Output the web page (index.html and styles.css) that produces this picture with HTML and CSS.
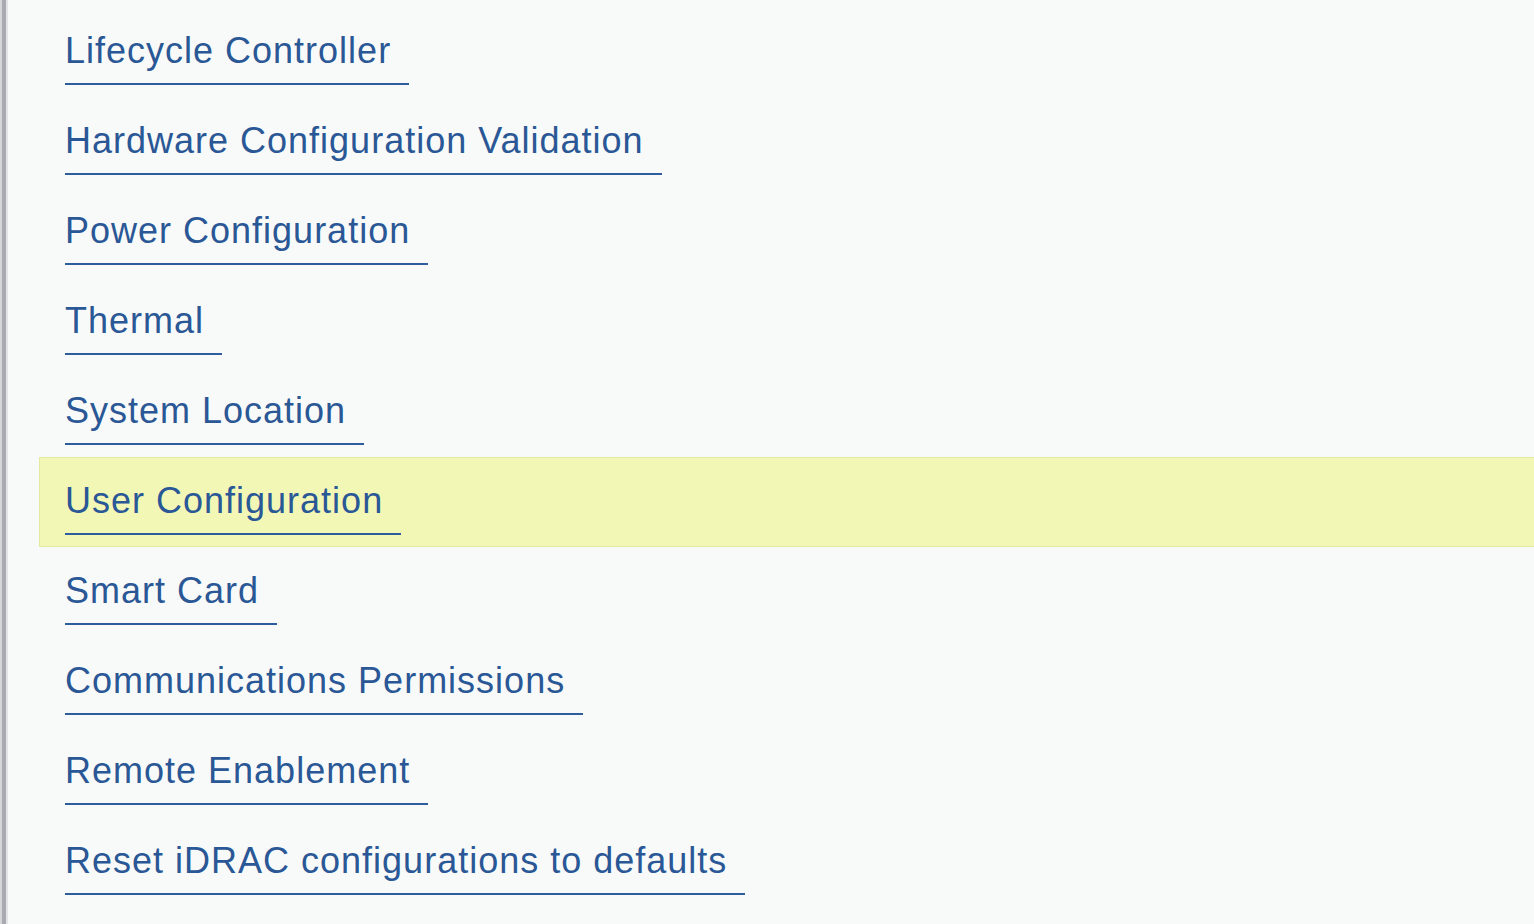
FILE: index.html
```html
<!DOCTYPE html>
<html lang="en">
<head>
<meta charset="utf-8">
<title>iDRAC Settings</title>
<link rel="stylesheet" href="styles.css">
</head>
<body>
<div class="page">
  <div class="edge"></div>
  <ul class="menu">
    <li class="row"><a class="link" href="#">Lifecycle Controller</a></li>
    <li class="row"><a class="link" href="#">Hardware Configuration Validation</a></li>
    <li class="row"><a class="link" href="#">Power Configuration</a></li>
    <li class="row"><a class="link" href="#">Thermal</a></li>
    <li class="row"><a class="link" href="#">System Location</a></li>
    <li class="row selected"><a class="link" href="#">User Configuration</a></li>
    <li class="row"><a class="link" href="#">Smart Card</a></li>
    <li class="row"><a class="link" href="#">Communications Permissions</a></li>
    <li class="row"><a class="link" href="#">Remote Enablement</a></li>
    <li class="row"><a class="link" href="#">Reset iDRAC configurations to defaults</a></li>
  </ul>
</div>
</body>
</html>
```

FILE: styles.css
```css
html, body {
  margin: 0;
  padding: 0;
  height: 100%;
  overflow: hidden;
}
body {
  background: #f8faf9;
  font-family: "Liberation Sans", Arial, sans-serif;
}
.page {
  display: flex;
  height: 100%;
}
.edge {
  flex: 0 0 8px;
  background: linear-gradient(to right, #d4d6d8 0, #d4d6d8 2px, #a7abaf 2px, #a7abaf 6px, #e2e4e6 6px, #e2e4e6 8px);
}
.menu {
  list-style: none;
  margin: 7px -4px 0 31px;
  padding: 0;
  flex: 1;
  display: flex;
  flex-direction: column;
}
.row {
  box-sizing: border-box;
  height: 90px;
  padding: 23px 0 0 25px;
  border: 1px solid transparent;
  display: flex;
  align-items: flex-start;
}
.row.selected {
  background: #f3f7b6;
  border-color: #e3eaa0;
}
.link {
  display: inline-block;
  font-size: 36px;
  line-height: 40px;
  letter-spacing: 1px;
  color: #2a5795;
  text-decoration: none;
  padding: 0 18px 12px 0;
  border-bottom: 2px solid #2d5d9c;
}
```
